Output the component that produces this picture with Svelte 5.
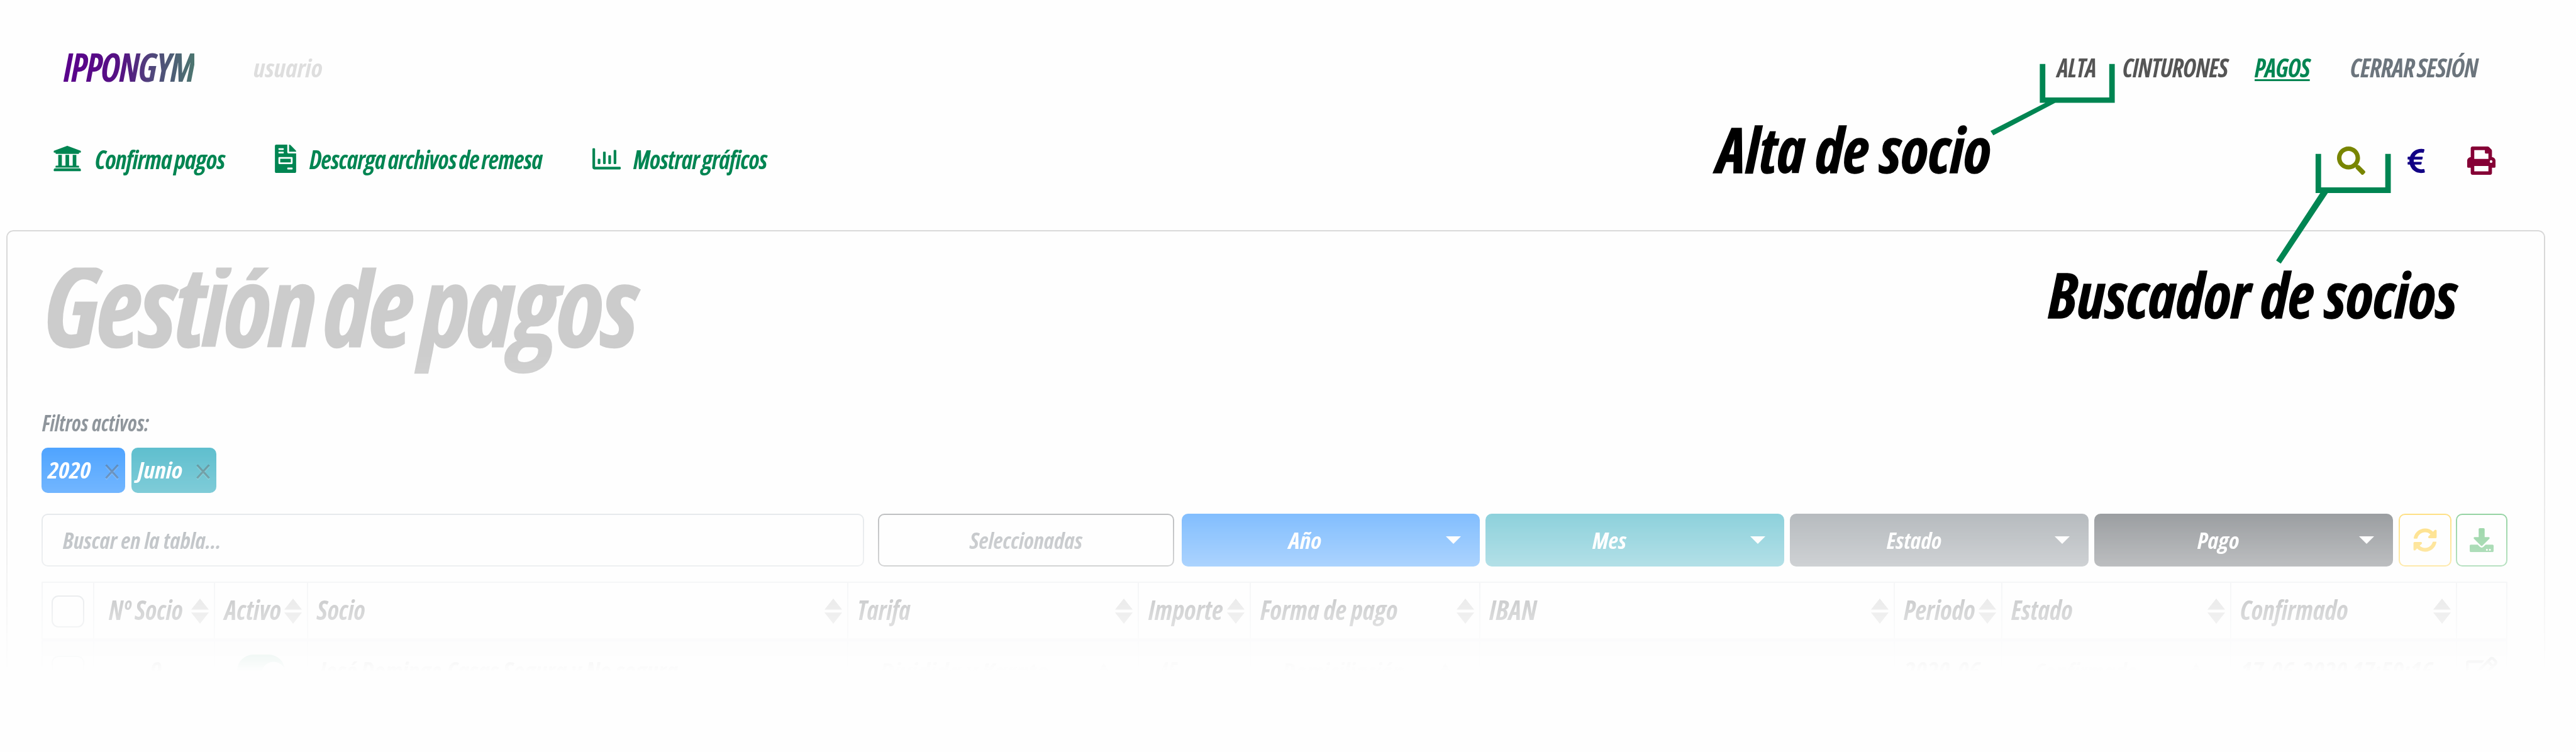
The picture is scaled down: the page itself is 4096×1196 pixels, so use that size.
<script>
  // Condenses a label horizontally so that it occupies exactly `width` pixels.
  function fit(node, width) {
    const natural = node.offsetWidth;
    node.style.transform = `scaleX(${width / natural})`;
    node.style.marginRight = `${width - natural}px`;
  }

  const icons = {
    bank: { vb: '0 0 512 512', d: 'M496 128v16a8 8 0 0 1-8 8h-24v12c0 6.627-5.373 12-12 12H60c-6.627 0-12-5.373-12-12v-12H24a8 8 0 0 1-8-8v-16a8 8 0 0 1 4.941-7.392l232-88a7.996 7.996 0 0 1 6.118 0l232 88A8 8 0 0 1 496 128zm-24 304H40c-13.255 0-24 10.745-24 24v16a8 8 0 0 0 8 8h464a8 8 0 0 0 8-8v-16c0-13.255-10.745-24-24-24zM96 192v192H60c-6.627 0-12 5.373-12 12v20h416v-20c0-6.627-5.373-12-12-12h-36V192h-64v192h-64V192h-64v192h-64V192H96z' },
    invoice: { vb: '0 0 384 512', d: 'M288 256H96v64h192v-64zm89-151L279.1 7c-4.5-4.5-10.6-7-17-7H256v128h128v-6.1c0-6.3-2.5-12.4-7-16.9zm-153 31V0H24C10.7 0 0 10.7 0 24v464c0 13.3 10.7 24 24 24h336c13.3 0 24-10.7 24-24V160H248c-13.2 0-24-10.8-24-24zM64 72c0-4.42 3.58-8 8-8h80c4.42 0 8 3.58 8 8v16c0 4.42-3.58 8-8 8H72c-4.42 0-8-3.58-8-8V72zm0 64c0-4.42 3.58-8 8-8h80c4.42 0 8 3.58 8 8v16c0 4.42-3.58 8-8 8H72c-4.42 0-8-3.58-8-8v-16zm256 304c0 4.42-3.58 8-8 8h-80c-4.42 0-8-3.58-8-8v-16c0-4.42 3.58-8 8-8h80c4.42 0 8 3.58 8 8v16zm0-200v96c0 8.84-7.16 16-16 16H80c-8.84 0-16-7.16-16-16v-96c0-8.84 7.16-16 16-16h224c8.84 0 16 7.16 16 16z' },
    chart: { vb: '0 0 512 512', d: 'M396.8 352h22.4c6.4 0 12.8-6.4 12.8-12.8V108.8c0-6.4-6.4-12.8-12.8-12.8h-22.4c-6.4 0-12.8 6.4-12.8 12.8v230.4c0 6.4 6.4 12.8 12.8 12.8zm-192 0h22.4c6.4 0 12.8-6.4 12.8-12.8V140.8c0-6.4-6.4-12.8-12.8-12.8h-22.4c-6.4 0-12.8 6.4-12.8 12.8v198.4c0 6.4 6.4 12.8 12.8 12.8zm96 0h22.4c6.4 0 12.8-6.4 12.8-12.8V204.8c0-6.4-6.4-12.8-12.8-12.8h-22.4c-6.4 0-12.8 6.4-12.8 12.8v134.4c0 6.4 6.4 12.8 12.8 12.8zM496 400H48V80c0-8.84-7.16-16-16-16H16C7.16 64 0 71.16 0 80v336c0 17.67 14.33 32 32 32h464c8.84 0 16-7.16 16-16v-16c0-8.84-7.16-16-16-16zm-387.2-48h22.4c6.4 0 12.8-6.4 12.8-12.8v-70.4c0-6.4-6.4-12.8-12.8-12.8h-22.4c-6.4 0-12.8 6.4-12.8 12.8v70.4c0 6.4 6.4 12.8 12.8 12.8z' },
    search: { vb: '0 0 512 512', d: 'M505 442.7L405.3 343c-4.5-4.5-10.6-7-17-7H372c27.6-35.3 44-79.7 44-128C416 93.1 322.9 0 208 0S0 93.1 0 208s93.1 208 208 208c48.3 0 92.7-16.4 128-44v16.3c0 6.4 2.5 12.5 7 17l99.7 99.7c9.4 9.4 24.6 9.4 33.9 0l28.3-28.3c9.4-9.4 9.4-24.6.1-34zM208 336c-70.7 0-128-57.2-128-128 0-70.7 57.2-128 128-128 70.7 0 128 57.2 128 128 0 70.7-57.2 128-128 128z' },
    euro: { vb: '0 0 320 512', d: 'M310.706 413.765c-1.314-6.63-7.835-10.872-14.424-9.369-10.692 2.439-27.422 5.413-45.426 5.413-56.763 0-101.929-34.79-121.461-85.449h113.689a12 12 0 0 0 11.708-9.369l6.373-28.36c1.686-7.502-4.019-14.631-11.708-14.631H115.22c-1.21-14.328-1.414-28.287.137-42.245H261.95a12 12 0 0 0 11.723-9.434l6.512-29.755c1.638-7.484-4.061-14.566-11.723-14.566H130.184c20.633-44.991 62.69-75.03 117.619-75.03 14.486 0 28.564 2.25 37.851 4.145 6.216 1.268 12.347-2.498 14.002-8.623l11.991-44.368c1.822-6.741-2.465-13.616-9.326-14.917C290.217 34.912 270.71 32 249.635 32 152.451 32 74.03 92.252 45.075 176H12c-6.627 0-12 5.373-12 12v29.755c0 6.627 5.373 12 12 12h21.569c-1.009 13.607-1.181 29.287-.181 42.245H12c-6.627 0-12 5.373-12 12v28.36c0 6.627 5.373 12 12 12h30.114C67.139 414.692 145.264 480 249.635 480c26.301 0 48.562-4.544 61.101-7.788 6.167-1.595 10.027-7.708 8.788-13.957l-8.818-44.49z' },
    print: { vb: '0 0 512 512', d: 'M448 192V77.25c0-8.49-3.37-16.62-9.37-22.63L393.37 9.37c-6-6-14.14-9.37-22.63-9.37H96C78.33 0 64 14.33 64 32v160c-35.35 0-64 28.65-64 64v112c0 8.84 7.16 16 16 16h48v96c0 17.67 14.33 32 32 32h320c17.67 0 32-14.33 32-32v-96h48c8.84 0 16-7.16 16-16V256c0-35.35-28.65-64-64-64zm-64 256H128v-96h256v96zm0-224H128V64h192v48c0 8.84 7.16 16 16 16h48v96zm48 72c-13.25 0-24-10.75-24-24 0-13.26 10.75-24 24-24s24 10.74 24 24c0 13.25-10.75 24-24 24z' },
    sync: { vb: '0 0 512 512', d: 'M370.72 133.28C339.458 104.008 298.888 87.962 255.848 88c-77.458.068-144.328 53.178-162.791 126.85-1.344 5.363-6.122 9.15-11.651 9.15H24.103c-7.498 0-13.194-6.807-11.807-14.176C33.933 94.924 134.813 8 256 8c66.448 0 126.791 26.136 171.315 68.685L463.03 40.97C478.149 25.851 504 36.559 504 57.941V192c0 13.255-10.745 24-24 24H345.941c-21.382 0-32.09-25.851-16.971-40.971l41.75-41.749zM32 296h134.059c21.382 0 32.09 25.851 16.971 40.971l-41.75 41.75c31.262 29.273 71.835 45.319 114.876 45.28 77.418-.07 144.315-53.144 162.787-126.849 1.344-5.363 6.122-9.15 11.651-9.15h57.304c7.498 0 13.194 6.807 11.807 14.176C478.067 417.076 377.187 504 256 504c-66.448 0-126.791-26.136-171.315-68.685L48.97 471.03C33.851 486.149 8 475.441 8 454.059V320c0-13.255 10.745-24 24-24z' },
    download: { vb: '0 0 512 512', d: 'M216 0h80c13.3 0 24 10.7 24 24v168h87.7c17.8 0 26.7 21.5 14.1 34.1L269.7 378.3c-7.5 7.5-19.8 7.5-27.3 0L90.1 226.1c-12.6-12.6-3.7-34.1 14.1-34.1H192V24c0-13.3 10.7-24 24-24zm296 376v112c0 13.3-10.7 24-24 24H24c-13.3 0-24-10.7-24-24V376c0-13.3 10.7-24 24-24h146.7l49 49c20.1 20.1 52.5 20.1 72.6 0l49-49H488c13.3 0 24 10.7 24 24zm-124 88c0-11-9-20-20-20s-20 9-20 20 9 20 20 20 20-9 20-20zm64 0c0-11-9-20-20-20s-20 9-20 20 9 20 20 20 20-9 20-20z' },
    edit: { vb: '0 0 576 512', d: 'M402.3 344.9l32-32c5-5 13.7-1.5 13.7 5.7V464c0 26.5-21.5 48-48 48H48c-26.5 0-48-21.5-48-48V112c0-26.5 21.5-48 48-48h273.5c7.1 0 10.7 8.6 5.7 13.7l-32 32c-1.5 1.5-3.5 2.3-5.7 2.3H48v352h352V350.5c0-2.1.8-4.1 2.3-5.6zm156.6-201.8L296.3 405.7l-90.4 10c-26.2 2.9-48.5-19.2-45.6-45.6l10-90.4L432.9 17.1c22.9-22.9 59.9-22.9 82.7 0l43.2 43.2c22.9 22.9 22.9 60 .1 82.8zM460.1 174L402 115.9 216.2 301.8l-7.3 65.3 65.3-7.3L460.1 174zm64.8-79.7l-43.2-43.2c-4.1-4.1-10.8-4.1-14.8 0L436 82l58.1 58.1 30.9-30.9c4-4.2 4-10.8-.1-14.9z' }
  };

  const actions = [
    { icon: 'bank', label: 'Confirma pagos', w: 207 },
    { icon: 'invoice', label: 'Descarga archivos de remesa', w: 370 },
    { icon: 'chart', label: 'Mostrar gráficos', w: 212 }
  ];

  const filters = [
    { label: 'Año', w: 52, kind: 'primary' },
    { label: 'Mes', w: 54, kind: 'info' },
    { label: 'Estado', w: 87, kind: 'secondary' },
    { label: 'Pago', w: 66, kind: 'dark' }
  ];

  const columns = [
    { label: 'Nº Socio', w: 118, indent: true },
    { label: 'Activo', w: 90 },
    { label: 'Socio', w: 77 },
    { label: 'Tarifa', w: 85 },
    { label: 'Importe', w: 119 },
    { label: 'Forma de pago', w: 218 },
    { label: 'IBAN', w: 75 },
    { label: 'Periodo', w: 114 },
    { label: 'Estado', w: 98 },
    { label: 'Confirmado', w: 172 }
  ];
</script>

{#snippet icon(name)}
  <svg class="icon {name}" viewBox={icons[name].vb} aria-hidden="true"><path d={icons[name].d} /></svg>
{/snippet}

<div class="page">
  <nav class="nav">
    <span class="t logo" use:fit={208}>IPPONGYM</span>
    <div class="user"><span class="t" use:fit={110}>usuario</span></div>
    <div class="links">
      <span class="t" use:fit={62}>ALTA</span>
      <span class="t" use:fit={167}>CINTURONES</span>
      <span class="t active" use:fit={88}>PAGOS</span>
      <span class="logout"><span class="t" use:fit={203}>CERRAR SESIÓN</span></span>
    </div>
  </nav>

  <div class="actions">
    {#each actions as a}
      <div class="action">{@render icon(a.icon)}<span class="t" use:fit={a.w}>{a.label}</span></div>
    {/each}
    <div class="tools">
      {@render icon('search')}{@render icon('euro')}{@render icon('print')}
    </div>
  </div>

  <main class="card">
    <h1><span class="t" use:fit={941}>Gestión de pagos</span></h1>
    <p class="caption"><span class="t" use:fit={170}>Filtros activos:</span></p>
    <div class="chips">
      <div class="chip primary">
        <span class="t" use:fit={69}>2020</span>
        <svg class="close" viewBox="0 0 22 24"><path d="M1.5 1.5 20.5 22.5M20.5 1.5 1.5 22.5" /></svg>
      </div>
      <div class="chip info">
        <span class="t" use:fit={71}>Junio</span>
        <svg class="close" viewBox="0 0 22 24"><path d="M1.5 1.5 20.5 22.5M20.5 1.5 1.5 22.5" /></svg>
      </div>
    </div>

    <div class="toolbar">
      <div class="box find"><span class="t" use:fit={252}>Buscar en la tabla...</span></div>
      <div class="box selected"><span class="t" use:fit={179}>Seleccionadas</span></div>
      {#each filters as f}
        <div class="drop {f.kind}">
          <div class="label"><span class="t" use:fit={f.w}>{f.label}</span></div>
          <i class="caret"></i>
        </div>
      {/each}
      <div class="box refresh">{@render icon('sync')}</div>
      <div class="box save">{@render icon('download')}</div>
    </div>

    <div class="table">
      <div class="row head">
        <div class="cell check"><i class="checkbox"></i></div>
        {#each columns as c}
          <div class="cell" class:indent={c.indent}>
            <span class="t" use:fit={c.w}>{c.label}</span>
            <svg class="sort" viewBox="0 0 28 40"><path d="M14 0 28 17.6H0zM14 40 28 22.2H0z" /></svg>
          </div>
        {/each}
        <div class="cell"></div>
      </div>
      <div class="row body">
        <div class="cell check"><i class="checkbox"></i></div>
        <div class="cell number"><span class="t" use:fit={18}>9</span></div>
        <div class="cell center"><i class="toggle"></i></div>
        <div class="cell name"><span class="t" use:fit={569}>José Domingo Casas Segura y No segura</span></div>
        <div class="cell select"><span class="t" use:fit={267}>Dividida y Karate</span><i class="up"></i></div>
        <div class="cell amount"><span class="t" use:fit={30}>45</span></div>
        <div class="cell select"><span class="t" use:fit={194}>Domiciliación</span><i class="up"></i></div>
        <div class="cell"></div>
        <div class="cell"><span class="t" use:fit={121}>2020-06</span></div>
        <div class="cell select"><span class="t" use:fit={165}>Confirmado</span><i class="up"></i></div>
        <div class="cell"><span class="t" use:fit={306}>17-06-2020 17:59:16</span></div>
        <div class="cell center">{@render icon('edit')}</div>
      </div>
    </div>
  </main>

  <!-- Callouts drawn over the interface -->
  <svg class="callouts" viewBox="0 0 4096 1196" aria-hidden="true">
    <path d="M3243.4 101.8h8.8v53.3h101.6v-53.3h8.8v61.8h-94.6L3169.5 215.3 3165 208.3 3252.3 163.6h-8.9z" />
    <path d="M3681.9 244.8h8.8V298h102v-53.2h8.8V307h-100.1L3626.6 419.2 3619.2 414.3 3689.3 307h-7.4z" />
  </svg>
  <div class="note enroll"><span class="t" use:fit={436}>Alta de socio</span></div>
  <div class="note finder"><span class="t" use:fit={650}>Buscador de socios</span></div>
</div>

<style>
  :global(body) { background: #fefefe; }
  .page {
    position: relative;
    width: 4096px;
    height: 1196px;
    overflow: hidden;
    box-sizing: border-box;
    padding-top: 60px;
    font: italic 700 42px/1 'Open Sans', 'Noto Sans', sans-serif;
    font-stretch: 75%;
    color: #212529;
  }
  .page * { box-sizing: border-box; }
  .t {
    display: inline-block;
    flex: none;
    white-space: nowrap;
    transform-origin: 0 50%;
  }
  .icon { display: block; flex: none; width: 45px; height: 45px; fill: currentColor; }
  .icon.bank { width: 46px; height: 46px; }
  .icon.invoice { width: 34px; }
  .icon.euro { width: 28px; height: 44px; }
  .icon.sync { width: 38px; height: 38px; }
  .icon.download { width: 42px; height: 38px; }
  .icon.edit { width: 50px; height: 46px; }

  .nav { display: flex; align-items: center; height: 92px; padding: 0 156px 0 101px; }
  .logo {
    font-size: 62px;
    line-height: 92px;
    letter-spacing: -.03em;
    color: transparent;
    background: linear-gradient(90deg, #5a008c 0%, #551383 45%, #50477b 68%, #4c7670 100%);
    -webkit-background-clip: text;
    background-clip: text;
  }
  .user { margin: 3px 0 0 94px; font-size: 40px; color: #dedede; }
  .links { display: flex; gap: 42.5px; margin: 1px 0 0 auto; color: #555; word-spacing: -.05em; letter-spacing: -.02em; }
  .active { color: #008552; text-decoration: underline; text-decoration-thickness: 2.6px; text-underline-offset: 2.8px; text-decoration-skip-ink: none; }
  .logout { display: flex; margin-left: 22px; color: #6c757d; }

  .actions { display: flex; align-items: center; gap: 80px; height: 200px; padding: 0 128px 0 84px; color: #008552; word-spacing: -.05em; letter-spacing: -.02em; }
  .action { display: flex; align-items: center; gap: 20.5px; }
  .action .t { margin-top: 2px; }
  .tools { display: flex; align-items: center; gap: 67px; margin: 7px 0 0 auto; }
  .tools .search { color: #788500; }
  .tools .euro { color: #120085; }
  .tools .print { color: #850035; }

  .card {
    width: 4037px;
    height: 830px;
    margin: 14px 0 0 10.4px;
    padding: 30.4px 57.8px 0 53.5px;
    border: 2.6px solid #d9d9d9;
    border-radius: 11px;
    mask-image: linear-gradient(#000 186px, transparent 702px);
  }
  h1 {
    margin: 0 0 0 5px;
    height: 170px;
    font-size: 176px;
    line-height: 170px;
    font-weight: 700;
    color: #ccc;
    letter-spacing: -.02em;
    word-spacing: -.06em;
    -webkit-text-stroke: 2.5px #ccc;
    clip-path: inset(27px -20px -60px -20px);
  }
  .caption { margin: 83.6px 0 0 1px; height: 40px; font-size: 35.5px; line-height: 40px; color: #6c757d; }
  .chips { display: flex; gap: 9.5px; margin-top: 19.8px; }
  .chip {
    display: flex;
    align-items: center;
    justify-content: space-between;
    width: 133.2px;
    height: 72.4px;
    padding: 0 10px;
    border-radius: 10px;
    color: #fff;
    font-size: 36px;
  }
  .chip.info { width: 135.2px; }
  .close { width: 22px; height: 24px; margin-top: 5px; fill: none; stroke: #000; stroke-opacity: .42; stroke-width: 3.2; filter: drop-shadow(0 2.6px 0 rgba(255, 255, 255, .35)); }

  .primary { background: #007bff; }
  .info { background: #17a2b8; }
  .secondary { background: #6c757d; }
  .dark { background: #343a40; }

  .toolbar { display: flex; gap: 9.3px; margin-top: 32.5px; height: 84px; font-size: 36px; }
  .toolbar .t { margin-top: 2px; }
  .box { display: flex; flex: none; align-items: center; justify-content: center; border: 2.7px solid; border-radius: 10px; background: #fff; }
  .find { width: 1308.2px; margin-right: 12.2px; padding-left: 32.5px; justify-content: flex-start; border-color: #ced4da; }
  .find .t { color: #6c757d; }
  .selected { width: 471.5px; margin-right: 2.2px; border-color: #7c7f82; color: #7c8389; }
  .drop { display: flex; flex: none; align-items: center; width: 474.6px; padding-right: 30px; border-radius: 10px; color: #fff; }
  .label { display: flex; justify-content: center; width: 394px; }
  .caret { margin-left: auto; border: 12px solid transparent; border-top-color: #fff; border-bottom: 0; }
  .refresh { width: 84px; margin-right: -2.5px; color: #ffc107; }
  .save { width: 82px; color: #28a745; }

  .table { margin-top: 24.1px; width: 3920.8px; border: solid #dee2e6; border-width: 2.5px 2.5px 0 0; }
  .row {
    display: grid;
    grid-template-columns: 82.3px 192px 147.7px 859px 462.5px 177.9px 364.4px 658.9px 171.1px 364px 359.7px 1fr;
  }
  .head { height: 93.5px; border-bottom: 5.2px solid #dee2e6; font-size: 42.5px; }
  .body { height: 94px; background: rgba(0, 0, 0, .04); }
  .cell {
    display: flex;
    align-items: center;
    justify-content: space-between;
    min-width: 0;
    padding: 0 8px 0 14.5px;
    border-left: 2.4px solid #dee2e6;
  }
  .cell.indent { padding-left: 23px; }
  .head .t { margin-top: -2px; }
  .cell.check, .cell.center { justify-content: center; padding: 0; }
  .checkbox { width: 51.5px; height: 51.5px; margin-top: 3px; border: 2.7px solid #adb5bd; border-radius: 11px; background: #fff; }
  .sort { flex: none; width: 28px; height: 40px; margin-top: 2px; fill: #aaa; }
  .cell.number { padding-left: 88px; }
  .cell.name { padding-left: 18px; }
  .cell.amount { padding-left: 31px; }
  .cell.amount, .cell.select { color: #8a8d90; }
  .cell.select { padding: 0 46px 0 50px; font-size: 38px; }
  .up { border: 8px solid transparent; border-bottom: 14px solid #8a8d90; border-top: 0; margin-top: -10px; }
  .toggle {
    width: 76px;
    height: 52px;
    border-radius: 26px;
    background: radial-gradient(circle at 58px 60%, #fff 19px, #008552 20px);
  }

  .callouts { position: absolute; inset: 0; width: 4096px; height: 1196px; fill: #008552; }
  .note { position: absolute; font-size: 99.5px; line-height: 100px; color: #000; -webkit-text-stroke: 1.4px #000; }
  .enroll { left: 2730px; top: 187px; }
  .finder { left: 3257px; top: 418.3px; }
</style>
